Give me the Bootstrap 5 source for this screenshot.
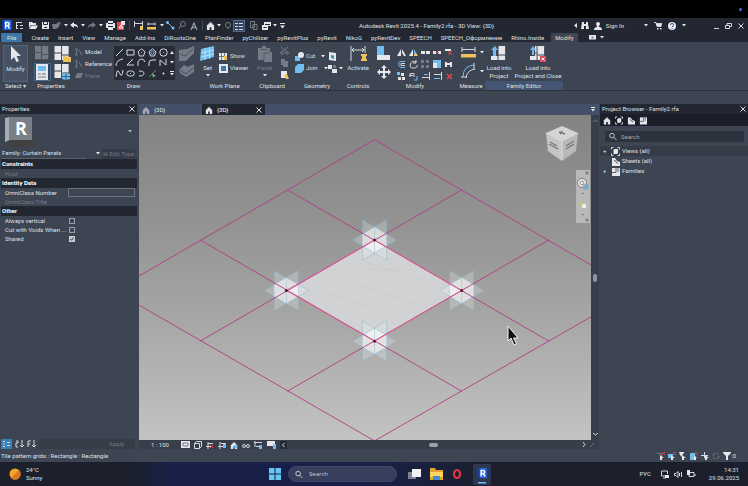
<!DOCTYPE html>
<html lang="en">
<head>
<meta charset="utf-8">
<meta name="viewport" content="width=device-width, initial-scale=1">
<title>Autodesk Revit 2025.4 - Family2.rfa - 3D View: {3D}</title>
<link rel="stylesheet" href="https://cdn.jsdelivr.net/npm/bootstrap@5.3.0/dist/css/bootstrap.min.css">
<script src="https://cdn.jsdelivr.net/npm/bootstrap@5.3.0/dist/js/bootstrap.bundle.min.js"></script>
<style>
:root{--ink:#222732;--panel:#3d4452;--deep:#2b303c;--slate:#435067;--txt:#dfe2e8;--mute:#747b88}
body{font:6px/8px Roboto,"Liberation Sans",sans-serif;color:var(--txt);background:var(--panel)}
button{background:none;border:0;padding:0;color:inherit;font:inherit;line-height:8px;white-space:nowrap}
a{color:inherit;text-decoration:none}
svg{display:block;flex:none;fill:none;stroke-width:1}
.w{fill:#e6e7ea}.b{fill:#71bdf0}.g{fill:#757b86}.y{fill:#eec35a}.r{fill:#df4552}
.sw{stroke:#d5d8de}.sb{stroke:#71bdf0}.sg{stroke:#757b86}.sr{stroke:#df4552}
.muted{color:var(--mute)}
.top-strip{height:18px;background:#000;padding-right:6px}
.rec-dot{width:3px;height:3px;background:#4766d8;border-radius:50%}
.titlebar{height:15px;background:var(--ink)}
.quick{display:grid;grid-template-columns:13px 13px 13px 12px 10px 9px 9px 8px 10px 8px 11px 11px 5px 13px 13px 7px 11px 12px 11px 6px 10px 7px 11px 12px 16px 10px 7px 9px;place-items:center}
.title-tools{gap:6px;padding-left:20px}
.sep{width:1px;height:9px;background:#444a57}
.lit{background:#35445b;outline:1px solid #4a6b90}
.tabs{height:9px;background:var(--ink);gap:9px;padding-left:1px}
.tabs a{line-height:9px}
.tab-file{background:#3e76a6;padding:0 6px}
.tab-on{background:var(--panel);padding:0 4px;margin:0 -2px 0 -2px}
.ribbon{height:49px;padding-top:4px;border-bottom:1px solid #2c323d}
.rp{display:flex;flex-direction:column;flex:none}
.rp-body{display:flex;flex:1;align-items:flex-start;align-content:flex-start;min-height:0}
.rp-name{height:9px;line-height:9px;flex:none;text-align:center;white-space:nowrap}
.rp-fam{background:#435572}
.p31{width:31px}.p40{width:40px}.p125{width:125px}.p57{width:57px}.p38{width:38px}.p52{width:52px}.p30{width:30px}.p84{width:84px}.p28{width:28px}.p78{width:78px}
.tilegrid{column-gap:4px;row-gap:2px}
.modbtn{width:23px;height:35px;margin-left:4px;background:#465164;outline:1px solid #50637c}
.big{display:flex;flex-direction:column;align-items:center;gap:2px}
.rowbtn{display:flex;align-items:center;gap:2px;height:12px}
.drawbox{width:61px;height:34px;background:#272c38;margin-left:2px;padding:1px 0;display:grid;grid-template-columns:repeat(5,11px) 6px;place-items:center}
.modgrid{display:grid;grid-template-columns:repeat(5,12px);grid-auto-rows:12px;place-items:center}
.options{height:13px}
.desk{gap:1px}
.left{width:137px;margin-right:1px}.right{width:148px}
.phead{height:10px;background:var(--ink);line-height:10px;padding:0 2px}
.typebox{height:34px;padding:1px 5px 0 4px}
.family{height:11px;padding-left:2px}
.family select{appearance:none;background:none;border:0;border-bottom:1px solid #59606d;color:inherit;font:inherit;padding:0;width:84px;height:10px}
.edit{background:#343a46;height:10px;width:33px}
.props{width:136px;border-collapse:collapse;table-layout:fixed;margin-left:1px}
.props td,.props th{padding:0 0 0 4px;height:9px;line-height:8px;white-space:nowrap}
.props th{background:var(--ink);height:10px;padding-left:1px;font-weight:700;color:#fff}
.props col:first-child{width:67px}
.props input[type=text]{display:block;width:67px;height:9px;margin-left:-4px;background:none;border:1px solid #6d7480;padding:0;color:inherit;font:inherit}
.props input[type=checkbox]{appearance:none;display:block;width:6px;height:6px;border:1px solid #9aa0aa;margin:0;margin-left:-3px}
.props input[type=checkbox]:checked{border-color:#c9ccd2;background:#c9ccd2 url("data:image/svg+xml,%3Csvg xmlns='http://www.w3.org/2000/svg' viewBox='0 0 4 4'%3E%3Cpath d='M.3 2 1.600 3.300 3.700.5' fill='none' stroke='%23222' stroke-width='.9'/%3E%3C/svg%3E") center/4px no-repeat}
.pfoot{height:11px;padding-left:1px;gap:3px}
.apply{background:#363c48;height:10px;margin-right:2px;padding-right:11px;text-align:right}
.doctabs{height:11px;background:var(--slate)}
.doctab{width:63px;padding:0 3px;gap:4px}
.doctab-on{background:var(--ink);color:#fff}
.canvas{background:linear-gradient(#838383,#949493 35%,#a8a8a7 65%,#c3c3c1);min-height:0}
.canvas>svg.scene{width:100%;height:100%;position:absolute;inset:0}
.cube{position:absolute;right:10px;top:9px}
.nav3d{position:absolute;right:1px;top:55px;width:14px;height:53px;background:#b9b9b9}
.pointer{position:absolute;right:72px;top:210px}
.vscroll{width:8px;background:#373d49}
.vthumb{width:4px;height:8px;border-radius:2px;background:#8b93a5}
.viewbar{height:9px;background:#373d49}
.viewbar .ics{gap:4px}
.hthumb{width:9px;height:4px;border-radius:2px;background:#9ba2b1}
.ptabs{height:12px;background:#1c1f29;gap:4px;padding-left:3px}
.find{height:11px;margin:5px 4px 4px 5px;background:#2d323e;gap:4px;padding-left:4px}
.find input{background:none;border:0;outline:0;color:inherit;font:inherit;padding:0;min-width:0}
.find input::placeholder,.tfind input::placeholder{color:#a4a9b3;opacity:1}
.tree li{height:10px;gap:2px;padding-left:3px}
.tree .hot{background:#353b47}
.plus{width:6px;flex:none}
.status{height:13px;padding:0 12px 0 1px}
.status .ics{gap:3px}
.taskbar{height:24px;background:linear-gradient(90deg,#1b202c 0 18%,#18204a 23% 48%,#1a2037 60%,#1b202c 65%)}
.weather{width:269px;padding-left:9px;gap:5px}
.tfind{width:109px;height:16px;border-radius:8px;background:#373f5c;margin:0 11px 0 7px;padding-left:6px;gap:6px;border:1px solid #404969}
.tfind input{background:none;border:0;outline:0;color:inherit;font:6px/9px "Open Sans",sans-serif;width:70px;padding:0}
.tfind input::placeholder{color:#d3d6df}
.apps{gap:9px}
.running{background:#2e3650;border-radius:2px;padding:4px 3px 1px;height:21px;width:18px}
.tray{gap:5px;padding-right:9px}
</style>
</head>
<body>
<svg width="0" height="0" class="position-absolute" aria-hidden="true">
<symbol id="dn" viewBox="0 0 4 3"><path class="w" d="M0 0h4L2 2.6z"/></symbol>
<symbol id="house" viewBox="0 0 10 10"><path class="w" d="M1 5 5 1l4 4v5H6V7H4v3H1z"/><path class="sg" d="M1 5 5 1l4 4"/></symbol>
<symbol id="tiles" viewBox="0 0 17 17"><path d="M0 0h7v7H0zM8 0h7v9H8zM0 8h7v7H0zM8 10h7v5H8z"/></symbol>
<symbol id="x" viewBox="0 0 6 6"><path class="sw" d="m.5.5 5 5m0-5-5 5"/></symbol>
<symbol id="glass" viewBox="0 0 9 9"><circle cx="3.5" cy="3.5" r="2.6" class="sw"/><path class="sw" d="m5.5 5.500 3 3"/></symbol>
<symbol id="rv" viewBox="0 0 10 11"><path fill="#2264e0" d="M0 0h9.500v10H0z"/><path fill="#123a93" d="M0 0h2v10H0z"/><path stroke="#fff" stroke-width="1.400" d="M3.600 8.500V2.500h2.200q1.400 0 1.400 1.500T5.800 5.500H3.600m2 0L7.600 8.500"/></symbol>
<symbol id="views" viewBox="0 0 9 9"><path class="sw" d="M.5 2.500v-2h2m4 0h2v2m0 4v2h-2m-4 0h-2v-2"/><path class="w" d="m2.500 3 1-1h3.500v4L6 7H2.500z"/></symbol>
<symbol id="sheets" viewBox="0 0 9 9"><path class="w" d="M1 1h3l2 3 3 1v4H1z"/><path stroke="#3d4452" d="m3 3 4 3.500"/></symbol>
<symbol id="fam" viewBox="0 0 9 9"><path class="w" d="M1 1h8v8H1z"/><path stroke="#59606b" d="M5 1v4.500H1M7 1v4"/></symbol>
</svg>
<div class="d-flex flex-column vh-100 overflow-hidden">
<div class="top-strip d-flex align-items-center justify-content-end flex-shrink-0"><span class="rec-dot"></span></div>

<header class="titlebar d-flex align-items-center flex-shrink-0">
<div class="quick">
<svg width="10" height="11"><use href="#rv"/></svg>
<svg width="9" height="9"><path class="sw" d="M1 1.500h6M1 4.500h2m2 0h3M1 7.500h2m2 0h3M1.500 1v7"/></svg>
<svg width="10" height="9"><path class="w" d="M1 1h3l1 1h3v2H3L1 7z"/><path class="w" d="M3.500 4.500H10L8 8H1z"/></svg>
<svg width="9" height="9"><path class="w" d="M1 1h7v7H1z"/><path stroke="#222732" d="M2.500 1v2.500h4V1M3 6.500h3"/></svg>
<svg width="9" height="9"><path class="g" d="M0 3h4l3-2v5L4 8H1z"/><path class="sg" d="M6 1.500h2v3"/></svg>
<svg width="4" height="3"><use href="#dn"/></svg>
<svg width="9" height="7"><path class="w" d="M0 3 4 0v2q4 0 4 4Q7 4 4 4v2z"/></svg>
<svg width="4" height="3"><use href="#dn"/></svg>
<svg width="9" height="7"><path class="g" d="M8 3 4 0v2Q0 2 0 6q1-2 4-2v2z"/></svg>
<svg width="4" height="3"><use href="#dn"/></svg>
<svg width="9" height="9"><path class="w" d="M2 0h5v2h2v5H7v2H2V7H0V2h2z"/><path stroke="#222732" d="M2 5.500h5M2 2.500h5"/></svg>
<svg width="9" height="9"><path class="r" d="M0 1h7v8H0z"/><path class="w" d="M4 0h4v4H4z"/><path stroke="#fff" d="m2 7 2-3 2 3z"/></svg>
<i class="sep"></i>
<svg width="10" height="9"><path class="sw" d="M.5 0v6M8.500 0v9M1 2.500h7"/><path class="y" d="M6 5h3v4H6z"/></svg>
<svg width="10" height="8"><path class="sw" d="M1 .5v3m7-3v3M1 2h7"/><path class="y" d="M0 5h9v2.500H0z"/></svg>
<svg width="4" height="3"><use href="#dn"/></svg>
<svg width="9" height="9"><path class="sb" d="m1.500 1.500 6 6"/><circle cx="1.500" cy="1.500" r="1.500" class="b"/><circle cx="7" cy="7" r="1.500" class="b"/></svg>
<svg width="9" height="9"><circle cx="5" cy="3" r="2.500" class="sg"/><path class="sg" d="m1 8 2-4"/></svg>
<svg width="8" height="8"><path stroke="#9298a3" stroke-width="1.300" d="m1 8 3-7 3 7M2 5.500h4"/></svg>
<i class="sep"></i>
<svg width="9" height="9" viewBox="0 0 10 10"><use href="#house"/></svg>
<svg width="4" height="3"><use href="#dn"/></svg>
<svg width="8" height="9"><circle cx="4" cy="4" r="2.500" class="sg"/><path class="g" d="M3 6h2L4 9z"/></svg>
<svg width="10" height="10" class="lit"><path class="sw" d="M1 2.500h3m1 0h4M1 5.500h3m1 0h4M1 8.500h3m1 0h4"/></svg>
<svg width="9" height="9"><path class="sg" d="M1.500.5h4v6h-4zM4 3.500h4v5H4z"/></svg>
<svg width="9" height="8"><path class="w" d="M2 0h7v4H6v4H0V3h2z"/><path stroke="#222732" d="M3 2.500h5M1.500 5.500h3"/></svg>
<svg width="4" height="3"><use href="#dn"/></svg>
<svg width="5" height="6"><path class="w" d="M0 0h5v1H0zM0 2.500h5L2.500 5.500z"/></svg>
</div>
<div class="flex-grow-1 ps-5 text-nowrap"><span class="ms-4">Autodesk Revit 2025.4 - Family2.rfa - 3D View: {3D}</span></div>
<div class="d-flex align-items-center gap-1">
<svg width="3" height="5"><path class="w" d="M3 0v5L0 2.500z"/></svg>
<svg width="9" height="7"><path class="w" d="M1 0h2v2h2V0h2v2l1 5H5V4H3v3H0z"/></svg>
<svg width="8" height="8"><circle class="w" cx="4" cy="2" r="2"/><path class="w" d="M0 8q0-3 3-3V3h2v2q3 0 3 3z"/></svg>
<button type="button">Sign In</button>
</div>
<div class="title-tools d-flex align-items-center">
<svg width="4" height="3"><use href="#dn"/></svg>
<svg width="8" height="8"><path class="sw" d="M0 .5h2l1 4h4l1-3H2"/><path class="w" d="M3 6h1.500v1.500H3zM6 6h1.500v1.500H6zM2 2h5v2H3z"/></svg>
<svg width="8" height="8"><circle class="w" cx="4" cy="4" r="4"/><path stroke="#2459ae" d="M2.500 3q0-1.500 1.500-1.500t1.500 1.200T4 5m0 1v1"/></svg>
<svg width="4" height="3"><use href="#dn"/></svg>
</div>
<div class="title-tools d-flex align-items-center ms-2 pe-1">
<svg width="5" height="6"><path class="sw" d="M0 5.500h5"/></svg>
<svg width="7" height="6"><path class="sw" d="M2 2.500v-2h4.500v3H5M.5 2.500h4v3h-4z"/></svg>
<svg width="6" height="6"><use href="#x"/></svg>
</div>
</header>

<nav class="tabs d-flex flex-shrink-0 text-nowrap">
<a href="#" class="tab-file">File</a><a href="#">Create</a><a href="#">Insert</a><a href="#">View</a><a href="#">Manage</a><a href="#">Add-Ins</a><a href="#">DiRootsOne</a><a href="#">PlanFinder</a><a href="#">pyChilizer</a><a href="#">pyRevitPlus</a><a href="#">pyRevit</a><a href="#">NikoG</a><a href="#">pyRevitDev</a><a href="#">SPEECH</a><a href="#">SPEECH_Оформление</a><a href="#">Rhino.Inside</a><a href="#" class="tab-on">Modify</a>
<a href="#" class="d-flex align-items-center gap-1 ps-1" aria-label="Ribbon display"><svg width="7" height="5"><path class="w" d="M0 0h7v4.500H0z"/><path class="g" d="M2.500 1.500h2v2h-2z"/></svg><svg width="4" height="3"><use href="#dn"/></svg></a>
</nav>

<section class="ribbon d-flex flex-shrink-0">
<div class="rp p31"><div class="rp-body">
<button type="button" class="modbtn big"><svg width="12" height="17"><path class="w" d="m1 0 10 10H6.500l2.500 5-2.500 1-2.400-5L1 14z"/></svg>Modify</button></div><div class="rp-name">Select ▾</div></div>
<div class="rp p40"><div class="rp-body tilegrid flex-wrap ps-1">
<svg width="15" height="15" class="g" viewBox="0 0 16 16"><use href="#tiles"/></svg>
<svg width="17" height="16"><use href="#tiles" class="w"/><path class="y" d="M9 10h3l1 1h4v5H9z"/></svg>
<svg width="15" height="16" class="lit"><path class="w" d="M1 0h12v16H1z"/><path class="b" d="M3 2h8v5H3z"/><path class="sg" d="M3 10h3m2 0h3M3 13h8M8 9v2"/></svg>
<svg width="17" height="16"><use href="#tiles" class="w"/><path class="b" d="m8 10 4-1 4 1v5l-4 1-4-1z"/><path stroke="#37648e" d="M12 9v7m-4-3.500h8"/></svg></div><div class="rp-name">Properties</div></div>
<div class="rp p125"><div class="rp-body ps-1">
<div><button type="button" class="rowbtn"><svg width="8" height="8"><path class="sg" d="M0 1h3m-1.500 0v6M4 2l3 5M0 7h3"/></svg>Model</button><button type="button" class="rowbtn"><svg width="8" height="8"><path class="sg" d="M0 1h3m-1.500 0v6M4 2l3 5M0 7h3"/></svg>Reference</button><button type="button" class="rowbtn muted"><svg width="8" height="8"><path class="g" d="M2 1h6L6 6H0z"/></svg>Plane</button></div>
<div class="drawbox">
<svg width="9" height="9"><path class="sw" d="m1 8 7-7"/></svg><svg width="9" height="9"><path class="sw" d="M1 2h7v5H1z"/></svg><svg width="9" height="9"><path class="sw" d="m4.500.8 3.500 3L6.500 8h-4L1 3.800z"/><path class="b" d="M4 4h1v1H4z"/></svg><svg width="9" height="9"><path class="sw" d="m4.500.8 3.500 3L6.500 8h-4L1 3.800z"/><circle cx="4.500" cy="4.800" r="1.500" class="sb"/></svg><svg width="9" height="9"><circle cx="4.500" cy="4.500" r="3.700" class="sw"/><path class="b" d="M4 4h1v1H4z"/></svg><svg width="4" height="3"><path class="w" d="M0 3h4L2 0z"/></svg>
<svg width="9" height="9"><path class="sw" d="M1 8q0-6 7-7"/></svg><svg width="9" height="9"><path class="sw" d="M7 1 1 7h7"/></svg><svg width="9" height="9"><path class="sw" d="M1 8V4q1-3 3.500-3T8 4"/></svg><svg width="9" height="9"><path class="sw" d="M1 8V5q0-3 3-3h4"/></svg><svg width="9" height="9"><path class="sw" d="M1 8V2l6 5V1"/></svg><svg width="4" height="3"><use href="#dn"/></svg>
<svg width="9" height="9"><path class="sw" d="M1 8q1-10 3.500-4T8 1"/></svg><svg width="9" height="9"><ellipse cx="4.500" cy="4.500" rx="3.800" ry="2.700" class="sw"/><path class="b" d="M4 4h1v1H4z"/></svg><svg width="9" height="9"><path class="sw" d="M2 2q5 0 5 2.500T2 7"/></svg><svg width="9" height="9"><path class="sg" d="m1 8 7-7"/><path fill="#69c274" d="m4 4 4 3-2 .5L5 9z"/></svg><svg width="9" height="9"><circle cx="4.500" cy="4.500" r="1" class="w"/></svg><svg width="4" height="5"><path class="w" d="M0 0h4v1H0zm0 2h4L2 4.500z"/></svg>
</div>
<div class="ps-1"><svg width="16" height="16"><path class="g" d="m0 4 8-1 7-3v7l-8 8H0z"/><path stroke="#454c59" d="m1 8 5 2 8-7"/></svg><svg width="16" height="18"><path class="g" d="m0 8 5-5 4 2 6-3v8l-8 5-6-4z"/><path stroke="#454c59" d="m1 8 6 4 7-6"/></svg></div>
</div><div class="rp-name">Draw</div></div>
<div class="rp p57"><div class="rp-body gap-1 ps-1">
<button type="button" class="big"><svg width="15" height="16"><path class="b" d="m1 3 13-3v11L0 15z"/><path stroke="#d6ecfa" stroke-width=".7" d="m1 7 13-3M1 11l13-3M5 2v12M9.500 1v12"/></svg>Set<svg width="4" height="3"><use href="#dn"/></svg></button>
<div class="pt-1"><button type="button" class="rowbtn"><svg width="9" height="9"><path class="w" d="M0 1h8v7H0z"/><path class="sg" d="M2.500 1v7m3-7v7M0 4.500h8"/><path class="y" d="M5 4h3v4H5z"/></svg>Show</button><button type="button" class="rowbtn"><svg width="9" height="9"><path class="w" d="M0 0h9v9H0z"/><path fill="#3b78ac" d="M2 2h5v5H2z"/></svg>Viewer</button></div>
</div><div class="rp-name">Work Plane</div></div>
<div class="rp p38"><div class="rp-body gap-2 ps-1">
<button type="button" class="big muted"><svg width="14" height="16"><path class="g" d="M0 2h4V0h4v2h4v4h2v10H6v-2H0z"/><path stroke="#525965" d="M6 14V7h6M3 3.500h6"/></svg>Paste<svg width="4" height="3"><use href="#dn"/></svg></button>
<div class="d-flex flex-column gap-1"><svg width="9" height="9"><path class="sg" d="m1 1 6 5M8 1 2 6"/><circle cx="2" cy="7" r="1.300" class="sg"/><circle cx="7" cy="7" r="1.300" class="sg"/></svg><svg width="9" height="8"><path class="g" d="M1 0h4v2h3v6H3V6H1z"/></svg><svg width="9" height="8"><path class="w" d="M1 0h6v7H1z"/><path class="y" d="m4 4 3-1 2 5H6z"/></svg></div>
</div><div class="rp-name">Clipboard</div></div>
<div class="rp p52"><div class="rp-body pt-1 ps-1 justify-content-between pe-1">
<div><button type="button" class="rowbtn"><svg width="9" height="9"><path class="b" d="M0 4h5v5H0z"/><circle cx="6" cy="3" r="3" class="w"/></svg>Cut <svg class="ms-1" width="4" height="3"><use href="#dn"/></svg></button><button type="button" class="rowbtn"><svg width="9" height="9"><path class="b" d="M3 0h6v6L6 9H0V3z"/></svg>Join <svg class="ms-1" width="4" height="3"><use href="#dn"/></svg></button></div>
<div><span class="rowbtn"><svg width="9" height="9"><path class="w" d="m1 0 7 1v8L1 8z"/><path fill="#3b91c5" d="m3 3 3 .5V7L3 6z"/></svg></span><span class="rowbtn"><svg width="9" height="9"><path class="w" d="M0 1h4v4H0zM4 5h5v4H4z"/><path class="g" d="M5 1h3v3H5z"/></svg><svg width="4" height="3"><use href="#dn"/></svg></span></div>
</div><div class="rp-name">Geometry</div></div>
<div class="rp p30"><div class="rp-body justify-content-center"><button type="button" class="big"><svg width="17" height="16"><path class="sw" d="M1 0v15M15 0v7M2 4h12M4 2 2 4l2 2m8-4 2 2-2 2"/><path class="y" d="M11 8h6v2h-1v3h1v2h-6v-2h1v-3h-1z"/></svg>Activate</button></div><div class="rp-name">Controls</div></div>
<div class="rp p84"><div class="rp-body ps-1">
<div class="d-flex flex-column gap-1"><svg width="14" height="15"><path class="b" d="M0 0h7v9H0z"/><path class="w" d="M0 9h13v5H0z"/></svg><svg width="14" height="14"><path class="w" d="m7 0 3 3H8v3h3V4l3 3-3 3V8H8v3h2l-3 3-3-3h2V8H3v2L0 7l3-3v2h3V3H4z"/></svg></div>
<div class="modgrid ms-1">
<svg width="9" height="9"><path class="w" d="M4 1v7H0zM5 1l4 7H7L5 5z"/></svg><svg width="9" height="9"><path class="w" d="M4 1v7H0z"/><path class="b" d="M5 1l4 7H5z"/><path class="y" d="M5 6h3v2H5z"/></svg><svg width="9" height="5"><path class="w" d="M0 1h4v3H0zm5 0h4v3H5z"/></svg><svg width="9" height="5"><path class="w" d="M0 1h3v3H0zm5 0h3v3H5z"/><path class="r" d="M3 2h3v1H3z"/></svg><svg width="8" height="8"><path class="w" d="M0 1h6v2H0z"/><path class="sr" d="m3 3 4 4m0-4L3 7"/></svg>
<svg width="9" height="9"><path class="sb" d="M8 1.500H4Q1.500 1.500 1.500 4T4 7.500h4"/><path class="sw" d="M8 3.500H4v2h4"/></svg><svg width="9" height="9"><path class="sw" d="M7 2Q3 0 1.500 4t3 4T8 5M7 0v3H4"/></svg><svg width="8" height="8"><path class="g" d="M0 0h3v3H0zm5 0h3v3H5zM0 5h3v3H0zm5 0h3v3H5z"/></svg><svg width="8" height="8"><path class="b" d="M0 0h8v8H0z"/><path class="w" d="M0 3h4v5H0z"/></svg><svg width="8" height="5"><path class="w" d="M0 0h2v1h3V0h2v5H5V3H2v2H0z"/></svg>
<svg width="8" height="8"><path class="b" d="M0 0h3v3H0z"/><path class="w" d="M4 1h3v3H4zM1 5h3v3H1zm4 0h3v3H5z"/></svg><svg width="9" height="9"><path class="sw" d="M1 5V1.500h4V5M0 3.500h4"/><path class="sb" d="M8 4v4H5"/></svg><svg width="9" height="8"><path class="sw" d="M8.500 0v8M1 5.500h7"/><path class="sb" d="M3 2.500h4"/></svg><svg width="9" height="8"><path class="sw" d="M8.500 0v8M1 2.500h7"/><path class="sb" d="M1 6.500h6"/></svg><svg width="7" height="7"><path class="sr" stroke-width="1.500" d="m1 1 5 5m0-5L1 6"/></svg>
</div></div><div class="rp-name">Modify</div></div>
<div class="rp p28"><div class="rp-body flex-column gap-1 ps-1">
<span class="d-flex align-items-center gap-1"><svg width="15" height="13"><path class="sw" d="M1 1v5m13-5v5M1 3.500h13"/><path class="y" d="M0 8h15v3.500H0z"/></svg><svg width="4" height="3"><use href="#dn"/></svg></span>
<span class="d-flex align-items-center gap-1"><svg width="15" height="16"><path class="sb" d="M2 14Q2 3 13 2"/><path class="sw" d="M5 15Q6 7 14 6M0 14h6M13 0v7"/></svg><svg width="4" height="3"><use href="#dn"/></svg></span>
</div><div class="rp-name">Measure</div></div>
<div class="rp p78"><div class="rp-body justify-content-around">
<button type="button" class="big"><svg width="16" height="16"><use href="#tiles" class="w"/><path fill="#3d4452" d="M0 0h7v10H0z"/><path class="b" d="M4 0 7 4H5v6H2V4H0z"/></svg><span>Load into<br>Project</span></button>
<button type="button" class="big"><svg width="16" height="16"><use href="#tiles" class="w"/><path fill="#3d4452" d="M0 0h5v10H0z"/><path class="b" d="M3 0l3 4H4v5H2V4H0z"/><path class="r" d="M10 10h6v6h-6z"/><path stroke="#fff" d="m11.500 11.500 3 3m0-3-3 3"/></svg><span>Load into<br>Project and Close</span></button>
</div><div class="rp-name rp-fam">Family Editor</div></div>
</section>
<div class="options flex-shrink-0"></div>

<main class="desk d-flex flex-grow-1 overflow-hidden">
<aside class="left d-flex flex-column flex-shrink-0">
<div class="phead d-flex justify-content-between align-items-center"><span>Properties</span><svg width="6" height="6"><use href="#x"/></svg></div>
<div class="typebox d-flex justify-content-between align-items-center"><svg width="32" height="32"><path fill="#41413f" d="M5 24h26v7H5z"/><path fill="#a9adb3" d="m1 2 5-1v23l-5 2z"/><path fill="#7b7f87" d="M5 1h23v23H5z"/><text x="11" y="19" font-family="Open Sans, sans-serif" font-weight="700" font-size="18" fill="#fff">R</text></svg><svg width="4" height="3" opacity=".7"><use href="#dn"/></svg></div>
<div class="family d-flex align-items-center"><select aria-label="Family type"><option>Family: Curtain Panels</option></select><svg width="16" height="3" viewBox="0 0 16 3"><use href="#dn" x="10" width="4" height="3"/></svg><button type="button" class="edit muted">⊞ Edit Type</button></div>
<table class="props"><colgroup><col><col></colgroup>
<tr><th colspan="2">Constraints</th></tr><tr class="muted"><td>Host</td><td></td></tr>
<tr><th colspan="2">Identity Data</th></tr><tr><td><label for="omni">OmniClass Number</label></td><td><input type="text" id="omni"></td></tr><tr class="muted"><td>OmniClass Title</td><td></td></tr>
<tr><th colspan="2">Other</th></tr><tr><td><label for="av">Always vertical</label></td><td><input type="checkbox" id="av"></td></tr><tr><td><label for="cv">Cut with Voids When ...</label></td><td><input type="checkbox" id="cv"></td></tr><tr><td><label for="sh">Shared</label></td><td><input type="checkbox" id="sh" checked></td></tr></table>
<div class="pfoot d-flex align-items-center mt-auto"><svg width="11" height="10"><path fill="#397fb6" d="M0 0h11v10H0z"/><path class="sw" d="M2 2.500h2M2 5h2M2 7.500h2M6 3.500h3M6 6.500h3"/></svg><svg width="9" height="8"><path class="sw" d="M1 1h2v2H1v4h2M7 0v7M5 5l2 2 2-2"/></svg><svg width="9" height="8"><path class="sw" d="M4 1H1v6M1 4h2M7 0v7M5 5l2 2 2-2"/></svg><button type="button" class="apply muted flex-grow-1">Apply</button></div>
</aside>

<section class="d-flex flex-column flex-grow-1 overflow-hidden">
<div class="doctabs d-flex align-items-stretch flex-shrink-0">
<a href="#" class="doctab d-flex align-items-center"><svg width="8" height="8" opacity=".6"><use href="#house"/></svg>{3D}</a>
<a href="#" class="doctab doctab-on d-flex align-items-center"><svg width="8" height="8"><use href="#house"/></svg><span class="flex-grow-1">{3D}</span><svg width="6" height="6"><use href="#x"/></svg></a>
<svg class="ms-auto me-1 align-self-center" width="4" height="5"><path class="w" d="M0 0h4v1H0zm0 2h4L2 4.500z"/></svg>
</div>
<div class="d-flex flex-grow-1">
<div class="canvas position-relative flex-grow-1 overflow-hidden">
<svg class="scene" viewBox="0 0 451 325" preserveAspectRatio="xMidYMid slice">
<defs><g id="node" fill="#fff" fill-opacity=".22" stroke="#7fb4d3" stroke-width=".7" stroke-opacity=".6"><path d="m-12-20 24 14v26L-12 6z"/><path d="m12-20-24 14v26L12 6z"/><path d="M-22 0 0-13 22 0 0 13z"/><path stroke="none" fill-opacity=".3" d="M0-13 12-6V6L0 13-12 6V-6z"/><path d="M0-13v26"/></g></defs>
<path fill="#d0d2d3" d="m235 125 87 50.500-87 50.500-88-50.500z"/>
<path fill="none" stroke="#c7c9ca" stroke-width=".6" d="M190 155h82M205 165l82 28M181 176l82 28M220 145l70 22"/>
<g><use href="#node" x="235" y="125"/><use href="#node" x="322" y="175.500"/><use href="#node" x="235" y="226"/><use href="#node" x="147" y="175.500"/></g>
<path stroke="#b23a88" stroke-width=".9" d="m235 25 261 151M148 75l261 151M61 125l261 151M-26 175l261 150.500M235 25-26 176M322 75 61 226M409 125 148 276M496 176 235 325.500"/>
<path stroke="#e05a91" stroke-width=".9" d="m235 125 87 50.500-87 50.500-88-50.500z"/>
<g fill="#5d1838"><circle cx="235" cy="125" r="1.500"/><circle cx="322" cy="175.500" r="1.500"/><circle cx="235" cy="226" r="1.500"/><circle cx="147" cy="175.500" r="1.500"/></g>
</svg>
<svg class="cube" width="37" height="41"><path fill="#8b8b91" d="m1 27 17-9 18 9-18 12z"/><path fill="#d4d4d4" d="M18 2 34 9 18 17 2 9z"/><path fill="#c5c5c6" d="m2 9 16 8v20L4 27z"/><path fill="#b9b9bb" d="m34 9-16 8v20l14-10z"/><path stroke="#dedede" d="m2 9 16 8 16-8M18 17v19"/><path stroke="#77777b" stroke-width="1.400" d="m15 8 6 2m-3-3-2 3M5 20l9 5m-8-7 7 4m9 3 8-5m-8 2 8-5"/></svg>
<svg class="nav3d" width="14" height="53"><circle cx="6" cy="13" r="4.500" fill="#eee" stroke="#77787a"/><circle cx="6" cy="13" r="2" stroke="#888"/><circle cx="10" cy="17" r="3" fill="#7fa9c4"/><path fill="#c7cb65" d="m3 31 3 3 4-2v4H3z"/><path fill="#eee" d="M6 34h4v4H6z"/><path stroke="#777" d="M10 2h2v2h-2zM6 23.500h2M6 44.500h2M10 49h2v2h-2z"/></svg>
<svg class="pointer" width="12" height="21"><path fill="#111" stroke="#f5f5f5" d="M1 1v15l3-3 3 7 2.500-1-3-6H11z"/></svg>
</div>
<div class="vscroll d-flex flex-column align-items-center justify-content-between py-1"><svg width="5" height="3"><path class="sg" d="m0 3 2.500-2L5 3"/></svg><span class="vthumb"></span><svg width="5" height="3"><path class="sw" d="m0 0 2.500 2L5 0"/></svg></div>
</div>
<div class="viewbar d-flex align-items-center flex-shrink-0">
<span class="ps-2 ms-1 me-2 pe-1">1 : 100</span>
<div class="ics d-flex align-items-center">
<svg width="9" height="7"><path class="w" d="M0 0h9v7H0z"/><path class="sg" d="M2 2h5v3H2z"/></svg><svg width="8" height="8"><path class="sw" d="M.5 2.500h5v5h-5zl2-2h5v5l-2 2"/></svg>
<svg width="8" height="8"><path class="sw" d="M0 5.500h6M2 1v7M2 2.500h5"/><path class="sr" d="m4 4 3 3m0-3L4 7"/></svg><svg width="8" height="8"><path class="sw" d="M0 5.500h5M2 1v7M3 2.500h5"/><path class="b" d="M5 3h3v4H5z"/></svg><svg width="8" height="8" viewBox="0 0 10 10"><use href="#house"/><path class="b" d="M5 5h4v4H5z"/></svg><svg width="8" height="6"><circle cx="2" cy="4" r="1.500" class="sw"/><circle cx="6" cy="4" r="1.500" class="sw"/></svg><svg width="9" height="8"><path class="sw" d="M1 0v6M0 1.500h8M2 5.500h4"/><path class="b" d="M5 4h3v4H5z"/></svg><svg width="9" height="8"><path class="w" d="M0 0h8v5H0z"/><path class="b" d="M6 3h3v5H6z"/></svg><svg width="7" height="8"><path fill="#252a35" d="M0 0h7v8H0z"/><path class="sw" d="M4.500 2 2.500 4l2 2"/></svg>
</div>
<span class="hthumb mx-auto"></span>
<svg class="me-1" width="14" height="7"><path class="sw" d="m2 1 2 2.500L2 6"/><path class="sg" d="m9 6 4-4"/></svg>
</div>
</section>

<aside class="right d-flex flex-column flex-shrink-0">
<div class="phead d-flex justify-content-between align-items-center"><span>Project Browser - Family2.rfa</span><svg width="6" height="6"><use href="#x"/></svg></div>
<div class="ptabs d-flex align-items-center"><svg width="8" height="9"><use href="#house"/></svg><svg width="8" height="9"><use href="#views"/></svg><svg width="8" height="9"><use href="#sheets"/></svg><svg width="8" height="9"><use href="#fam"/></svg></div>
<div class="find d-flex align-items-center"><svg width="8" height="9"><use href="#glass"/></svg><input type="search" placeholder="Search" aria-label="Search browser"></div>
<ul class="tree list-unstyled mb-0">
<li class="hot d-flex align-items-center"><span class="plus">+</span><svg width="9" height="9"><use href="#views"/></svg>Views (all)</li>
<li class="d-flex align-items-center"><span class="plus"></span><svg width="9" height="9"><use href="#sheets"/></svg>Sheets (all)</li>
<li class="d-flex align-items-center"><span class="plus">+</span><svg width="9" height="9"><use href="#fam"/></svg>Families</li>
</ul>
</aside>
</main>

<footer class="status d-flex align-items-center justify-content-between flex-shrink-0"><span>Tile pattern grids : Rectangle : Rectangle</span>
<div class="ics d-flex align-items-center">
<svg width="8" height="8"><path class="sg" d="M0 1.500h4v3"/><path class="sr" d="m5 0 3 3m0-3L5 3"/><path class="w" d="m3 3 4 3H5v2H3z"/></svg><svg width="8" height="8"><path class="b" d="M0 2h5v4H0z"/><path class="sr" d="m5 0 3 3m0-3L5 3"/><path class="w" d="m3 3 4 3H5v2H3z"/></svg><svg width="8" height="8"><path class="w" d="M0 0h5v1L3 3l4 3H5v2H3V5L1 3z"/></svg><svg width="8" height="8"><path class="b" d="M0 1h5v7H0z"/><path class="sr" d="m5 0 3 3m0-3L5 3"/><path class="w" d="m4 3 3 3H6v2H4z"/></svg><svg width="8" height="8"><path class="sw" d="M3.500 0v6M0 3.500h7"/><path class="w" d="m4 3 4 3H6v2H4z"/></svg><svg width="8" height="8"><circle cx="4" cy="4" r="3" class="sg" stroke-dasharray="2 1"/></svg><span class="d-flex align-items-center"><svg width="8" height="8"><path class="w" d="M0 0h8v1L5 4v4H3V4L0 1z"/></svg>:0</span>
</div></footer>

<footer class="taskbar d-flex align-items-center flex-shrink-0">
<div class="weather d-flex align-items-center flex-shrink-0"><svg width="12" height="12"><circle cx="6" cy="6" r="5.500" fill="#f3a22b"/><path fill="#db7723" d="m10 2-8 8a5.500 5.500 0 0 0 8-8"/></svg><span>24°C<br>Sunny</span></div>
<svg width="12" height="12"><path fill="#67c7f5" d="M0 0h5.500v5.500H0zm6.500 0H12v5.500H6.500zM0 6.500h5.500V12H0zm6.500 0H12V12H6.500z"/></svg>
<div class="tfind d-flex align-items-center"><svg width="8" height="9"><use href="#glass"/></svg><input type="search" placeholder="Search" aria-label="Search Windows"></div>
<div class="apps d-flex align-items-center">
<svg width="13" height="12"><path fill="#7e8290" d="M0 4h8v7H0z"/><path fill="#f1f1f2" d="M4 1h9v8H4z"/></svg><svg width="13" height="12"><path fill="#e1a42f" d="M0 0h5l1 2h7v10H0z"/><path fill="#ffd45c" d="M0 4h13v5H0z"/><path fill="#3d8fd1" d="M3 8h7v4H3z"/></svg><svg class="me-n1" width="12" height="12"><ellipse cx="4" cy="6" rx="3" ry="4" transform="translate(1)" stroke="#e53540" stroke-width="2.200"/></svg>
<button type="button" class="running d-flex flex-column align-items-center justify-content-between" aria-label="Revit"><svg width="11" height="11" viewBox="0 0 10 11"><use href="#rv"/></svg><svg width="8" height="2"><path class="b" d="M0 0h8v1.500H0z"/></svg></button></div>
<div class="tray d-flex align-items-center ms-auto"><span class="me-1">РУС</span><svg width="9" height="9"><path class="sw" d="M7.500 4V1h-6v5H5M3 8h3"/><path class="w" d="M5 5h4v3H5z"/></svg><svg width="8" height="7"><path class="sw" d="M.5 2.500H2l2-2v6l-2-2H.5zM5.500 2v3M7.500 1v5"/></svg><svg width="9" height="8"><path class="sw" d="M2 2.500h5v4H2zM8 4v2"/><path class="w" d="M0 0h3v5H0z"/></svg><span class="text-end ms-2">14:31<br>29.06.2025</span></div>
</footer>
</div>
</body>
</html>
